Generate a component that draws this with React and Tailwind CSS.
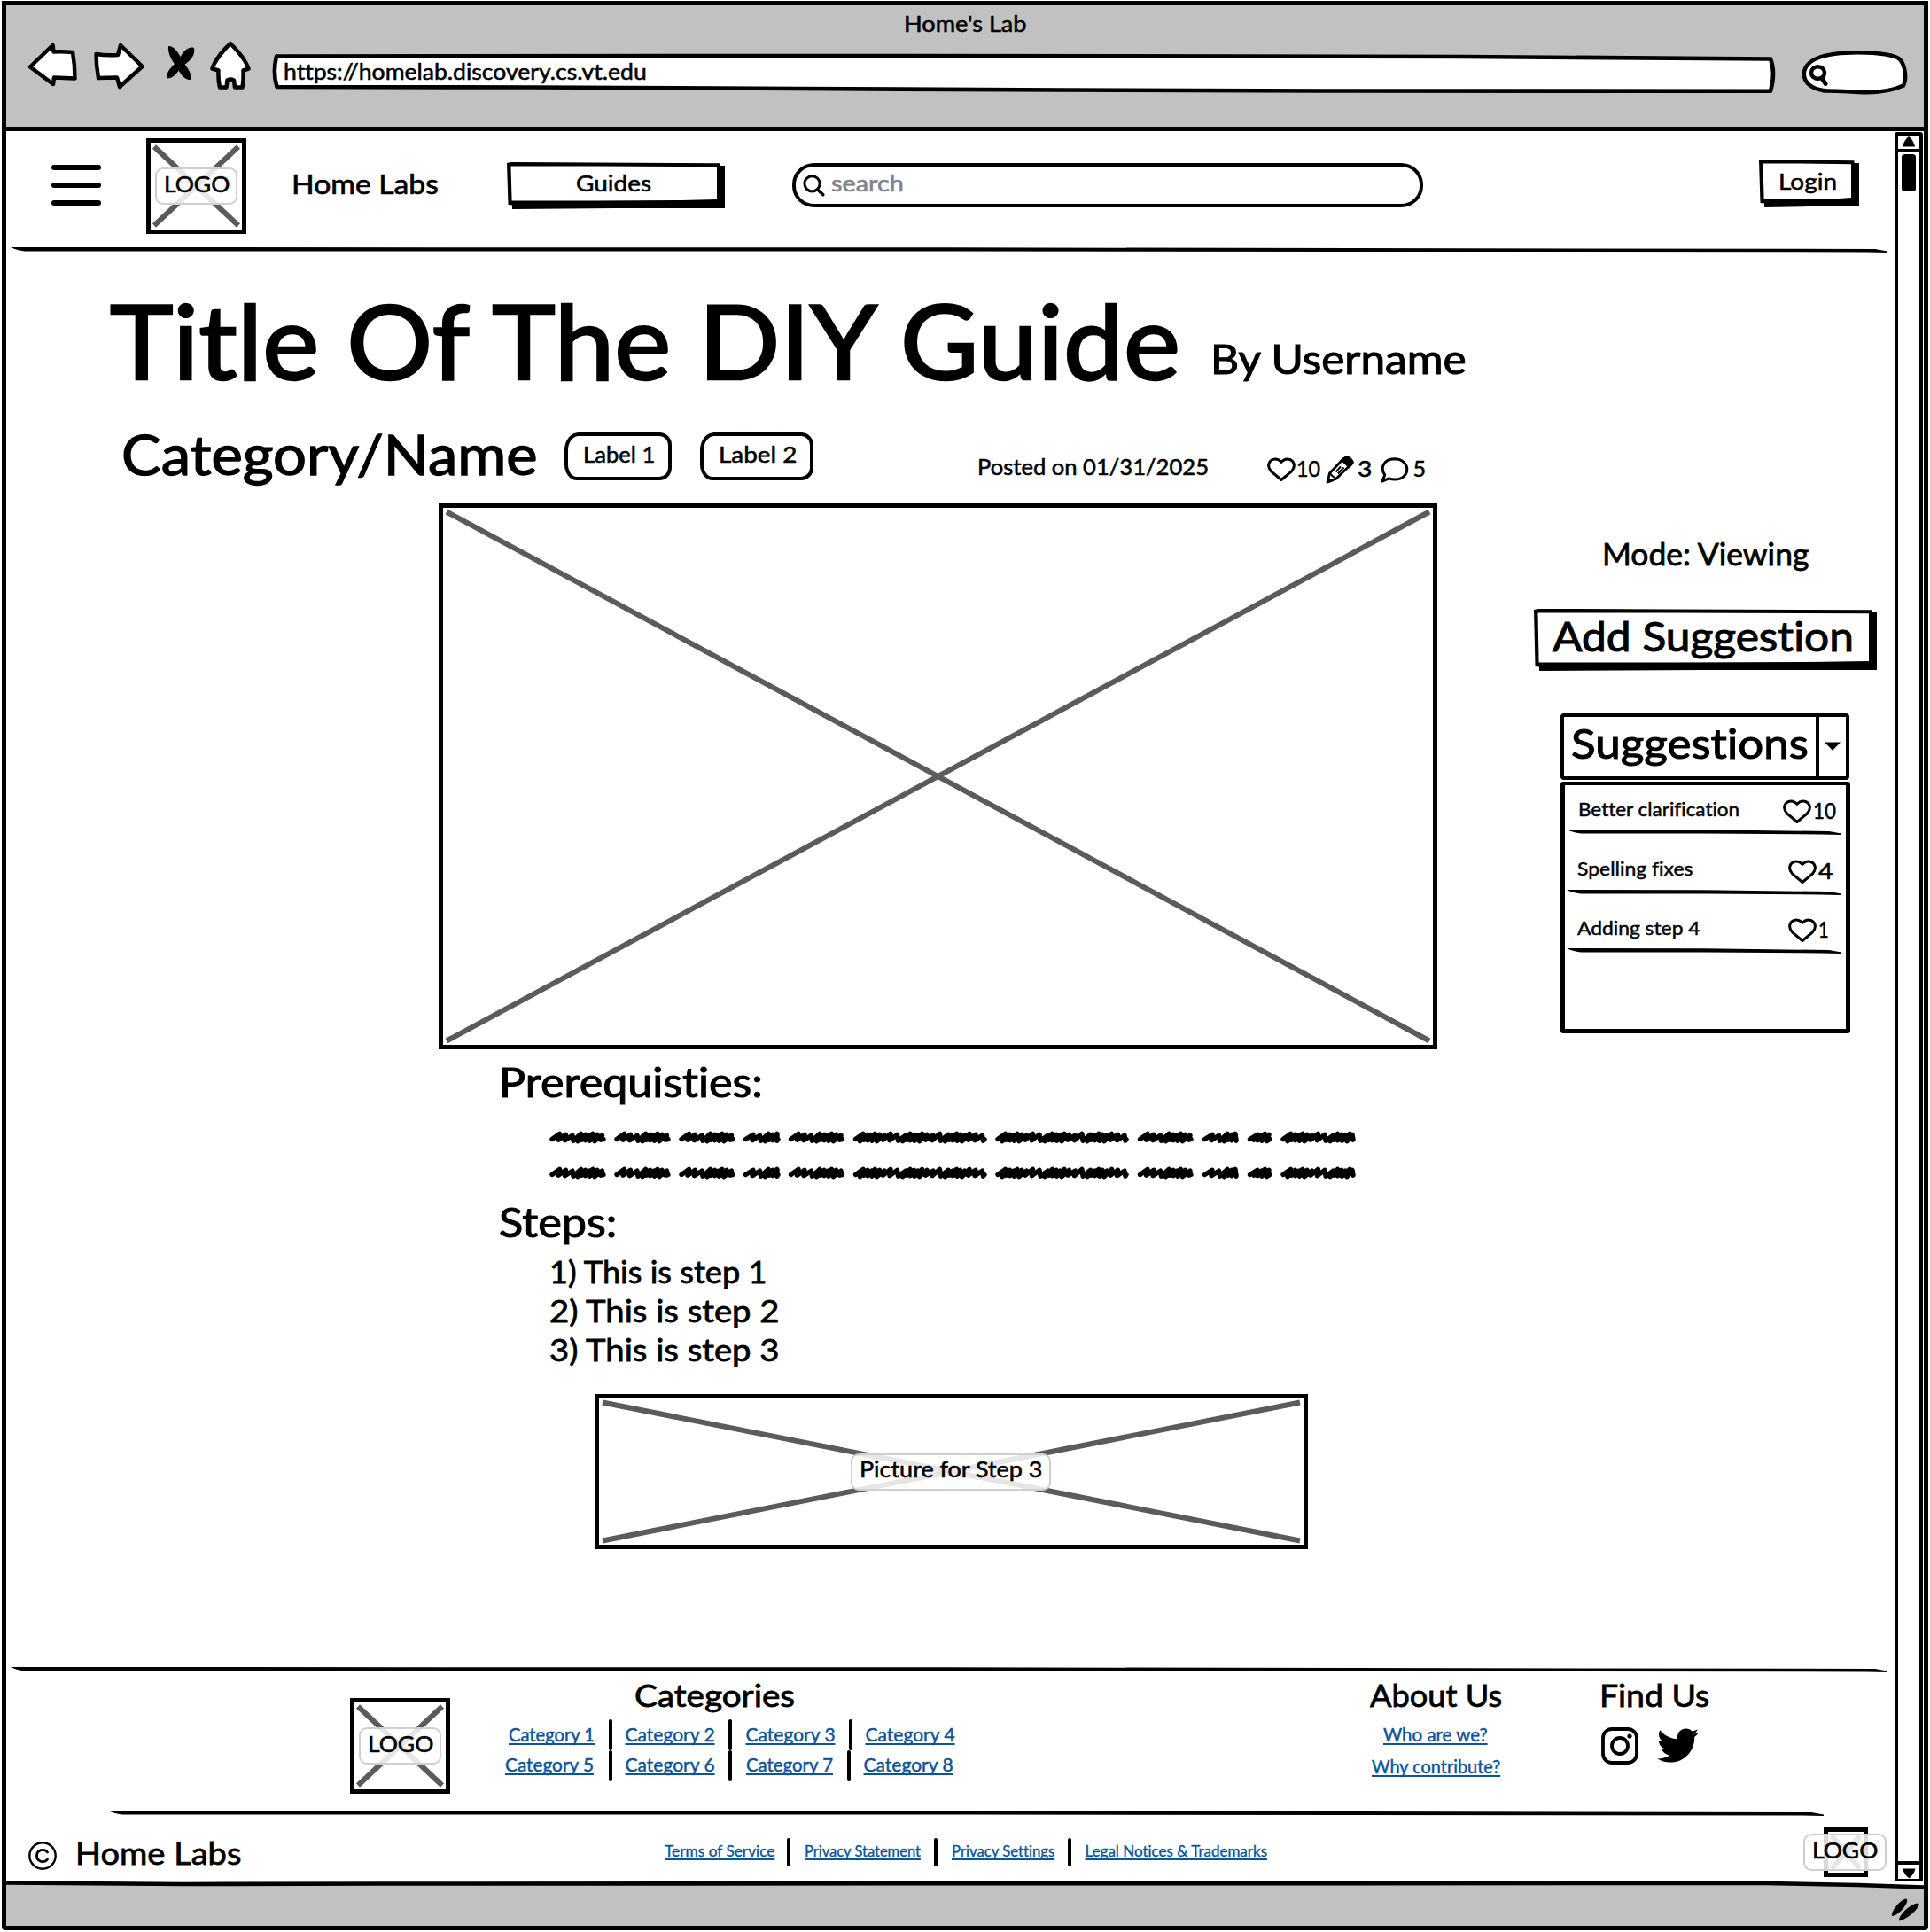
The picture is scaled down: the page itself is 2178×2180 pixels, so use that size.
import React, { useLayoutEffect, useRef, useState } from "react";
import { FaTwitter } from "react-icons/fa";

const INK = "#000";

/* A line of text stretched or condensed to a given width. */
function Txt({ w, className = "", inner = "", children }) {
  const ref = useRef(null);
  const [scale, setScale] = useState(1);
  useLayoutEffect(() => {
    if (ref.current) setScale((w + 3) / ref.current.offsetWidth);
  }, [w, children]);
  return (
    <div className={"shrink-0 whitespace-nowrap leading-none " + className} style={{ width: w }}>
      <span
        ref={ref}
        className={"-ml-[1.5px] inline-block origin-left [-webkit-text-stroke:0.022em_currentColor] " + inner}
        style={{ transform: `scaleX(${scale})` }}
      >
        {children}
      </span>
    </div>
  );
}

function Link({ w, className = "", children }) {
  return (
    <Txt
      w={w}
      className={"text-[#0b5497] " + className}
      inner="underline decoration-2 underline-offset-[2px] [text-decoration-skip-ink:none]"
    >
      {children}
    </Txt>
  );
}

function Rule({ w, className = "" }) {
  return (
    <svg className={"block shrink-0 " + className} width={w} height="6" viewBox={`0 0 ${w} 6`}>
      <path
        d={`M0 0 L${w * 0.5} 0.3 L${w - 14} 2 L${w} 4.4 V6 L${w - 24} 5.4 L${w * 0.5} 4.5 L16 4.4 Q6 3.5 0 0Z`}
        fill={INK}
      />
    </svg>
  );
}

function SketchButton({ w, h, className = "", children }) {
  return (
    <button className={"relative block shrink-0 " + className} style={{ width: w, height: h }}>
      <svg className="absolute inset-0" width={w} height={h}>
        <path
          d={`M0 1 L5 0 L${w * 0.4} 0.4 L${w - 5.5} 1.3 V4 H${w} V${h - 1} L${w * 0.5} ${h - 1} L6 ${h} V${h - 4.5} L1.5 ${h - 5} Z`}
          fill={INK}
        />
        <path
          d={`M4.5 4.6 L${w * 0.4} 4.4 L${w - 9} 5.2 V${h - 11} L${w * 0.8} ${h - 10} L${w * 0.4} ${h - 9.6} L5.6 ${h - 9.5} Z`}
          fill="#fff"
        />
      </svg>
      <div className="relative flex h-full items-start">{children}</div>
    </button>
  );
}

function Crossed({ w, h, className = "", children }) {
  return (
    <div
      className={"relative shrink-0 border-[5px] border-black bg-white " + className}
      style={{ width: w, height: h }}
    >
      <svg className="absolute -left-[5px] -top-[5px]" width={w} height={h}>
        <path
          d={`M9 9.5 L${w - 9} ${h - 9.5} M${w - 9} 9.5 L9 ${h - 9.5}`}
          stroke="#5b5b5d"
          strokeWidth="6"
        />
      </svg>
      {children}
    </div>
  );
}

function Tag({ className = "", children }) {
  return (
    <div className={"absolute rounded-[9px] border-2 border-[#cfcfcf] bg-white/85 text-[25px] " + className}>
      {children}
    </div>
  );
}

function Logo({ className = "" }) {
  return (
    <Crossed w={113} h={108} className={className}>
      <Tag className="left-[5px] top-[28px] h-[42px] w-[93px] pl-[9px] pt-[4px]">
        <Txt w={71}>LOGO</Txt>
      </Tag>
    </Crossed>
  );
}

function Heart({ className = "" }) {
  return (
    <svg className={"block shrink-0 " + className} width="32" height="28" viewBox="0 0 32 28" fill="none">
      <path
        d="M16 25.5 L4.5 15.8 C0 11 1 5 6 2.6 C9.5 1.2 13 2 16 5.3 C19 2 22.5 1.2 26 2.6 C31 5 32 11 27.5 15.8 Z"
        stroke={INK}
        strokeWidth="3"
        strokeLinejoin="round"
      />
    </svg>
  );
}

function Pencil({ className = "" }) {
  return (
    <svg className={"block shrink-0 " + className} width="33" height="33" viewBox="0 0 33 33" fill="none">
      <path
        d="M2 31 L4.5 21 L20 4.5 L28 11.5 L11.5 27.5 Z"
        stroke={INK}
        strokeWidth="2.8"
        strokeLinejoin="round"
      />
      <path d="M17 6.5 L22 1.6 C25 -0.5 34 6.5 31.3 10.5 L26.5 15.5 Z" fill={INK} />
      <path d="M1 32.5 L2.6 25.5 L8 30.6 Z" fill={INK} />
      <path d="M5 21.5 L8 24.5 L11.5 27 M11.5 19.5 L17 13.5 M13.8 21.5 L20.5 14.5" stroke={INK} strokeWidth="2" />
    </svg>
  );
}

function Bubble({ className = "" }) {
  return (
    <svg className={"block shrink-0 " + className} width="32" height="29" viewBox="0 0 32 29" fill="none">
      <path
        d="M1.8 27 L4.8 20 C-0.5 13 2.5 2 15.5 1.8 C34 2 34.5 24 17 25 C13.5 25.2 11.5 24.6 9.5 23.8 Z"
        stroke={INK}
        strokeWidth="3"
        strokeLinejoin="round"
      />
    </svg>
  );
}

function Magnifier({ className = "" }) {
  return (
    <svg className={"block shrink-0 " + className} width="25" height="25" viewBox="0 0 25 25" fill="none">
      <ellipse cx="10.5" cy="10.3" rx="8.6" ry="8.6" stroke={INK} strokeWidth="3" />
      <path d="M16.5 16.8 L22.8 22.8" stroke={INK} strokeWidth="3.4" strokeLinecap="round" />
    </svg>
  );
}

const WORDS = [
  [620, 684], [693, 757], [766, 830], [838.5, 881], [889.5, 953.5], [962.5, 1114],
  [1123, 1274], [1283.5, 1347], [1356.5, 1398], [1407.5, 1436], [1445, 1530],
];

/* Slanted back-and-forth pen strokes covering one word. */
function scribble(from, to) {
  const start = from - 620 + 3;
  const end = to - 620 - 3;
  const steps = [7, 7.5, 9.5, 5, 4.5, 4, 5, 5.5];
  const width = to - from;
  let i = width > 80 ? 3 : width < 35 ? 4 : width < 50 ? 1 : 0;
  let x = start;
  let d = `M${x} ${9.5}`;
  while (x < end - 4) {
    const top = 3.4 + (i % 3) * 0.9;
    const low = 10.2 + (i % 4) * 0.5;
    const up = Math.min(x + 8.5, end - 1);
    x = Math.min(x + steps[i % 8], end);
    d += ` L${up} ${top} L${x} ${low}`;
    i += 1;
  }
  return d + ` L${end} ${9.5}`;
}

function ScribbleLine({ className = "" }) {
  return (
    <svg className={"block shrink-0 " + className} width="912" height="15" viewBox="0 0 912 15" fill="none">
      {WORDS.map(([a, b]) => (
        <path key={a} d={scribble(a, b)} stroke={INK} strokeWidth="5.4" strokeLinecap="round" strokeLinejoin="round" />
      ))}
    </svg>
  );
}

function BrowserBar() {
  return (
    <header className="h-[142px] shrink-0 border-b-[5px] border-black bg-[#c1c1c1] pt-[8px] text-[25px]">
      <div className="flex justify-center">
        <Txt w={136}>Home's Lab</Txt>
      </div>
      <div className="flex items-start">
        <svg className="ml-[23px] mt-[7px] block shrink-0" width="58" height="54" viewBox="30 46 58 54">
          <path
            d="M34 75.5 L59.5 51 L60.5 58.5 Q72 58 82 59 Q84.500 73 84.500 88.500 L61 87.500 L60 95 Z"
            fill="#fff" stroke={INK} strokeWidth="4.5" strokeLinejoin="round"
          />
        </svg>
        <svg className="ml-[16px] mt-[7px] block shrink-0" width="60" height="56" viewBox="104 46 60 56">
          <path
            d="M108.500 61 Q120 63 133 62 L136 51 L160.500 75 L135 98 L132 87.500 L111 88 Q108.500 74 108.500 61 Z"
            fill="#fff" stroke={INK} strokeWidth="4.5" strokeLinejoin="round"
          />
        </svg>
        <svg className="ml-[22px] mt-[7px] block shrink-0" width="36" height="54" viewBox="186 46 36 54">
          <path d="M190 52 C197 51 203 62 206 69 C212 77 217 84 216 90 C208 91 203 83 200 76 C194 69 189 60 190 52Z" fill={INK} />
          <path d="M219 54 C213 52 206 58 203 66 C198 72 188 78 188 88 C194 90 200 83 204 76 C211 71 221 65 219 54Z" fill={INK} />
        </svg>
        <svg className="ml-[14px] mt-[5px] block shrink-0" width="48" height="60" viewBox="236 44 48 60">
          <path
            d="M260 49 C267 56 277 67 280.500 77.500 L274.500 79.500 Q275 90 273.500 98.500 L265 98.500 L264 90.500 Q260 88.500 256.500 90.500 L255.500 98.500 L248 98.500 Q246 90 246.500 79.500 L239.500 77.500 C243 66 253 56 260 49 Z"
            fill="#fff" stroke={INK} strokeWidth="4.500" strokeLinejoin="round"
          />
        </svg>
        <div className="relative ml-[22px] mt-[19px] h-[50px] w-[1698px] shrink-0 pl-[15px] pt-[10px]">
          <svg className="absolute inset-0" width="1698" height="50" viewBox="306 58 1698 50">
            <path
              d="M312 63.500 L1000 63 L1650 64 L1998 66.500 Q2004 82 1998 102.800 L1500 102.500 L1200 101.500 L900 100 L600 98.500 L312.500 98 Q307.500 82 312 63.500 Z"
              fill="#fff" stroke={INK} strokeWidth="4.600" strokeLinejoin="round"
            />
          </svg>
          <Txt w={407} className="relative">https://homelab.discovery.cs.vt.edu</Txt>
        </div>
        <svg className="ml-[28px] mt-[16px] block shrink-0" width="122" height="54" viewBox="2032 55 122 54" fill="none">
          <path
            d="M2062 102.500 C2044 101 2035.500 93 2035.800 83 C2037 66 2062 59.500 2096 59.300 C2120 59.500 2138 62 2144 67 C2150 74 2152 88 2148 96.500 C2136 102 2120 105 2098 104 C2085 103.500 2074 102 2057 102.500"
            fill="#fff" stroke={INK} strokeWidth="4.500" strokeLinejoin="round"
          />
          <ellipse cx="2051.500" cy="82" rx="7.500" ry="6.800" stroke={INK} strokeWidth="4.500" />
          <path d="M2056 88 L2060 94.500" stroke={INK} strokeWidth="5" strokeLinecap="round" />
        </svg>
      </div>
    </header>
  );
}

function Nav() {
  return (
    <nav className="flex h-[131px] shrink-0 items-start">
      <div className="ml-[51px] mt-[38px] flex w-[56px] shrink-0 flex-col gap-[14px]">
        <div className="h-[6px] rounded-full bg-black" />
        <div className="h-[6px] rounded-full bg-black" />
        <div className="h-[6px] rounded-full bg-black" />
      </div>
      <Logo className="ml-[51px] mt-[8px]" />
      <Txt w={163} className="ml-[52px] mt-[44px] text-[30px]">Home Labs</Txt>
      <SketchButton w={246} h={53} className="ml-[79px] mt-[35px]">
        <Txt w={82} className="ml-[79px] mt-[11px] text-left text-[25px]">Guides</Txt>
      </SketchButton>
      <div className="ml-[76px] mt-[36px] flex h-[50px] w-[712px] shrink-0 items-start rounded-[25px/24px] border-[4px] border-black">
        <Magnifier className="ml-[8px] mt-[9px]" />
        <Txt w={79} className="ml-[8px] mt-[6px] text-[25px] text-[#83838d]">search</Txt>
      </div>
      <SketchButton w={113} h={54} className="ml-[379px] mt-[32px]">
        <Txt w={63} className="ml-[23px] mt-[12px] text-left text-[25px]">Login</Txt>
      </SketchButton>
    </nav>
  );
}

function Label({ w, className = "", children }) {
  return (
    <div
      className={"h-[54px] shrink-0 rounded-[16px_14px_14px_14px/20px_14px_14px_18px] border-[4px] border-black pl-[18px] pt-[8px] text-[25px] " + className}
      style={{ width: w }}
    >
      <Txt w={w - 43}>{children}</Txt>
    </div>
  );
}

const SUGGESTIONS = [
  { name: "Better clarification", w: 179, n: "10", nw: 23, row: "h-[50px]", text: "ml-[16px] mt-[16px]", right: "ml-[51px] mt-[16px]" },
  { name: "Spelling fixes", w: 128, n: "4", nw: 14, row: "h-[62px]", text: "ml-[15px] mt-[27px]", right: "ml-[109px] mt-[28px]" },
  { name: "Adding step 4", w: 136, n: "1", nw: 9, row: "h-[60px]", text: "ml-[15px] mt-[26px]", right: "ml-[101px] mt-[26px]" },
];

function Sidebar() {
  return (
    <aside className="ml-[24px] mt-[322px] flex w-[387px] shrink-0 flex-col items-start">
      <Txt w={230} className="ml-[78px] text-[35px]">Mode: Viewing</Txt>
      <SketchButton w={387} h={70} className="mt-[45px]">
        <Txt w={337} className="ml-[22px] mt-[8px] text-left text-[46px]">Add Suggestion</Txt>
      </SketchButton>
      <div className="ml-[30px] mt-[48px] flex h-[75px] w-[326px] items-start rounded-[4px] border-[4px] border-black">
        <Txt w={265} className="ml-[9px] mt-[7px] text-[46px]">Suggestions</Txt>
        <div className="ml-[10px] h-full w-[4px] bg-black" />
        <svg className="ml-[6px] mt-[28px] block" width="18" height="10" viewBox="0 0 18 10">
          <path d="M0 0.500 H18 L9 9.700 Z" fill={INK} />
        </svg>
      </div>
      <div className="ml-[30px] mt-[2px] h-[284px] w-[327px] rounded-[3px] border-[5px] border-t-[4px] border-black">
        {SUGGESTIONS.map((s) => (
          <div key={s.name}>
            <div className={"flex items-start " + s.row}>
              <Txt w={s.w} className={"text-[21px] " + s.text}>{s.name}</Txt>
              <Heart className={s.right} />
              <Txt w={s.nw} className={"text-[25px] !ml-[3px] " + s.right}>{s.n}</Txt>
            </div>
            <Rule w={310} className="ml-[2px]" />
          </div>
        ))}
      </div>
    </aside>
  );
}

function Guide() {
  return (
    <article className="w-[1700px] shrink-0">
      <div className="flex h-[159px] items-start pt-[41px]">
        <Txt w={1205} className="ml-[118px] text-[116px]">Title Of The DIY Guide</Txt>
        <Txt w={286} className="ml-[37px] mt-[55px] text-[47px]">By Username</Txt>
      </div>
      <div className="flex h-[124px] items-start text-[25px]">
        <Txt w={467} className="ml-[131px] mt-[38px] text-[61px]">Category/Name</Txt>
        <Label w={121} className="ml-[32px] mt-[44px]">Label 1</Label>
        <Label w={128} className="ml-[32px] mt-[44px]">Label 2</Label>
        <Txt w={258} className="ml-[186px] mt-[70px]">Posted on 01/31/2025</Txt>
        <Heart className="ml-[68px] mt-[72px]" />
        <Txt w={24} className="ml-[2px] mt-[72px]">10</Txt>
        <Pencil className="ml-[8px] mt-[69px]" />
        <Txt w={14} className="ml-[4px] mt-[72px]">3</Txt>
        <Bubble className="ml-[11px] mt-[72px]" />
        <Txt w={12} className="ml-[6px] mt-[72px]">5</Txt>
      </div>
      <Crossed w={1127} h={616} className="ml-[488px]" />
      <Txt w={295} className="ml-[557px] mt-[13px] text-[47px]">Prerequisties:</Txt>
      <ScribbleLine className="ml-[613px] mt-[32px]" />
      <ScribbleLine className="ml-[613px] mt-[25px]" />
      <Txt w={130} className="ml-[557px] mt-[24px] text-[47px]">Steps:</Txt>
      <div className="ml-[614px] mt-[15px] flex flex-col gap-[9px] text-[35px]">
        <Txt w={242}>1) This is step 1</Txt>
        <Txt w={256}>2) This is step 2</Txt>
        <Txt w={256}>3) This is step 3</Txt>
      </div>
      <Crossed w={805} h={175} className="ml-[664px] mt-[33px]">
        <Tag className="left-[284px] top-[62px] h-[42px] w-[226px] pl-[9px] pt-[3px]">
          <Txt w={203}>Picture for Step 3</Txt>
        </Tag>
      </Crossed>
    </article>
  );
}

function Bar({ className = "" }) {
  return <div className={"w-[4px] shrink-0 rounded-full bg-black " + className} />;
}

function FooterTop() {
  return (
    <div className="flex h-[156px] shrink-0 items-start">
      <Logo className="ml-[388px] mt-[29px]" />
      <section className="ml-[61px] mt-[8px] w-[509px] shrink-0">
        <Txt w={178} className="ml-[148px] text-[35px]">Categories</Txt>
        <div className="mt-[10px] flex items-start text-[21px]">
          <Link w={94} className="ml-[6px] mt-[6px]">Category 1</Link>
          <Bar className="ml-[18px] h-[35px]" />
          <Link w={98} className="ml-[16px] mt-[6px]">Category 2</Link>
          <Bar className="ml-[17px] h-[35px]" />
          <Link w={98} className="ml-[17px] mt-[6px]">Category 3</Link>
          <Bar className="ml-[17px] h-[35px]" />
          <Link w={98} className="ml-[16px] mt-[6px]">Category 4</Link>
        </div>
        <div className="flex items-start text-[21px]">
          <Link w={97} className="ml-[2px] mt-[5px]">Category 5</Link>
          <Bar className="ml-[19px] h-[35px]" />
          <Link w={98} className="ml-[16px] mt-[5px]">Category 6</Link>
          <Bar className="ml-[17px] h-[35px]" />
          <Link w={95} className="ml-[17px] mt-[5px]">Category 7</Link>
          <Bar className="ml-[18px] h-[35px]" />
          <Link w={98} className="ml-[16px] mt-[5px]">Category 8</Link>
        </div>
      </section>
      <section className="ml-[469px] mt-[8px] flex w-[146px] shrink-0 flex-col items-center text-[21px]">
        <Txt w={146} className="text-[35px]">About Us</Txt>
        <Link w={115} className="mt-[16px]">Who are we?</Link>
        <Link w={142} className="mt-[15px]">Why contribute?</Link>
      </section>
      <section className="ml-[113px] mt-[8px] shrink-0">
        <Txt w={121} className="text-[35px]">Find Us</Txt>
        <div className="ml-px mt-[19px] flex items-start gap-[21px]">
          <svg width="42" height="42" viewBox="0 0 42 42" fill="none" stroke={INK}>
            <rect x="2" y="2" width="38" height="38" rx="10" strokeWidth="3.8" />
            <circle cx="21" cy="21" r="9" strokeWidth="3.800" />
            <circle cx="32" cy="10" r="2.600" fill={INK} stroke="none" />
          </svg>
          <FaTwitter className="-mt-[3px] h-[47px] w-[47px]" />
        </div>
      </section>
    </div>
  );
}

function FooterBottom() {
  return (
    <div className="flex h-[74px] shrink-0 items-start text-[17px]">
      <svg className="ml-[25px] mt-[29px] shrink-0" width="32" height="32" viewBox="0 0 32 32" fill="none" stroke={INK}>
        <circle cx="16" cy="16" r="14.700" strokeWidth="2.400" />
        <path d="M21.500 12 C18 7.500 9.500 9 9.500 16 C9.500 23 18 24.500 21.500 20" strokeWidth="2.800" strokeLinecap="round" />
      </svg>
      <Txt w={184} className="ml-[22px] mt-[24px] text-[35px]">Home Labs</Txt>
      <Link w={121} className="ml-[481px] mt-[31px]">Terms of Service</Link>
      <Bar className="ml-[16px] mt-[25px] h-[32px]" />
      <Link w={128} className="ml-[17px] mt-[31px]">Privacy Statement</Link>
      <Bar className="ml-[17px] mt-[25px] h-[32px]" />
      <Link w={113} className="ml-[17px] mt-[31px]">Privacy Settings</Link>
      <Bar className="ml-[17px] mt-[25px] h-[32px]" />
      <Link w={203} className="ml-[17px] mt-[31px]">Legal Notices &amp; Trademarks</Link>
      <Crossed w={50} h={56} className="ml-[629px] mt-[13px]">
        <Tag className="-left-[28px] top-[2px] h-[42px] w-[94px] pl-[9px] pt-[4px]">
          <Txt w={71}>LOGO</Txt>
        </Tag>
      </Crossed>
    </div>
  );
}

function Scrollbar() {
  return (
    <div className="mt-[1px] flex h-[1975px] w-[32px] shrink-0 flex-col items-center rounded-[3px] border-[4px] border-black">
      <div className="flex h-[19px] w-full shrink-0 justify-center border-b-[4px] border-black pt-[1px]">
        <svg width="14" height="12" viewBox="0 0 14 12">
          <path d="M0 11.500 C1 7 4 2 7 0 C10 2 13 7 14 11.500 Z" fill={INK} />
        </svg>
      </div>
      <div className="mt-[2px] h-[42px] w-[16px] shrink-0 rounded-[4px/3px] bg-black" />
      <div className="mt-auto flex h-[20px] w-full shrink-0 justify-center border-t-[4px] border-black pt-[4px]">
        <svg width="15" height="12" viewBox="0 0 15 12">
          <path d="M0 0.500 H14.500 C13.500 5 10.500 9 7.500 11.500 C4 9 1 5 0 0.500 Z" fill={INK} />
        </svg>
      </div>
    </div>
  );
}

function StatusBar() {
  return (
    <footer className="h-[50px] shrink-0 bg-[#c1c1c1]">
      <svg className="block" width="2164" height="50" viewBox="0 0 2164 50">
        <path d="M0 0 H2164 V6 L1985 2 H0 Z" fill="#fff" />
        <path
          d="M0 1.500 L200 3 L420 2.500 L1985 2 L2090 4 L2164 6.500"
          fill="none" stroke={INK} strokeWidth="4.600"
        />
        <path d="M2128 39 C2127 33 2138 20 2144 19.500 C2149 21 2138 37 2130 38.500Z" fill={INK} />
        <path d="M2136 44.500 C2135 38 2150 24 2158 24.500 C2162 27 2146 43 2136 44.500Z" fill={INK} />
      </svg>
    </footer>
  );
}

export default function App() {
  return (
    <div className="h-[2180px] w-[2178px] overflow-hidden bg-white pl-[2px] pt-[1px] font-['Lato','Open_Sans',sans-serif] text-black [font-variant-ligatures:none]">
      <div className="flex h-[2177px] w-[2174px] flex-col rounded-b-[4px] border-[5px] border-black">
        <BrowserBar />
        <div className="flex h-[1975px] shrink-0">
          <main className="flex w-[2131px] shrink-0 flex-col">
            <Nav />
            <Rule w={2118} className="ml-[5px]" />
            <div className="flex h-[1596px] shrink-0 items-start">
              <Guide />
              <Sidebar />
            </div>
            <Rule w={2118} className="ml-[5px]" />
            <FooterTop />
            <Rule w={1936} className="ml-[115px]" />
            <FooterBottom />
          </main>
          <Scrollbar />
        </div>
        <StatusBar />
      </div>
    </div>
  );
}
